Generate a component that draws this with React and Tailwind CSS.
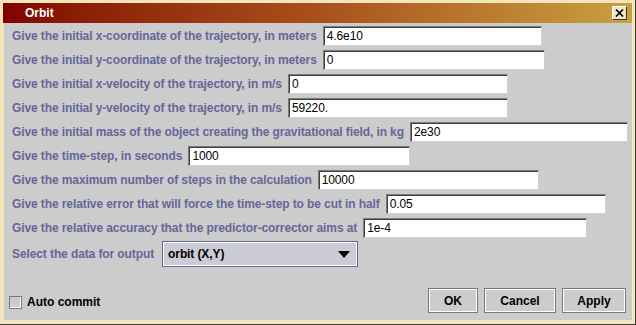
const rows = [
  { label: "Give the initial x-coordinate of the trajectory, in meters", value: "4.6e10", w: "w-[219px]" },
  { label: "Give the initial y-coordinate of the trajectory, in meters", value: "0", w: "w-[222px]" },
  { label: "Give the initial x-velocity of the trajectory, in m/s", value: "0", w: "w-[220px]" },
  { label: "Give the initial y-velocity of the trajectory, in m/s", value: "59220.", w: "w-[220px]" },
  { label: "Give the initial mass of the object creating the gravitational field, in kg", value: "2e30", w: "w-[218px]" },
  { label: "Give the time-step, in seconds", value: "1000", w: "w-[222px]" },
  { label: "Give the maximum number of steps in the calculation", value: "10000", w: "w-[221px]" },
  { label: "Give the relative error that will force the time-step to be cut in half", value: "0.05", w: "w-[220px]" },
  { label: "Give the relative accuracy that the predictor-corrector aims at", value: "1e-4", w: "w-[224px]" },
];

function Field({ value, w }) {
  return (
    <div className={`${w} shrink-0 h-[20px] bg-white border border-[#7a7a7a] border-r-[#cfcfcf] border-b-[#cfcfcf] shadow-[inset_1px_1px_0_#404040] flex items-center pl-[3px] text-[12px] text-black font-normal`}>
      {value}
    </div>
  );
}

function Button({ children, w }) {
  return (
    <div className={`${w} h-[25px] border border-[#7a7a7a] bg-[#cccccc] shadow-[inset_1px_1px_0_#ffffff,inset_-1px_-1px_0_#ffffff] flex items-center justify-center text-[12px] font-bold text-black`}>
      {children}
    </div>
  );
}

export default function App() {
  return (
    <div className="w-[636px] h-[325px] overflow-hidden bg-[#f3e6bd] border-r border-b border-[#3a3a3a] pt-[3px] pl-[3px] pr-[3px] pb-[4px] flex flex-col" style={{ fontFamily: '"Liberation Sans", Arial, sans-serif' }}>
      <div className="h-[20px] bg-gradient-to-r from-[#820000] via-[#a8501c] to-[#c8a040] flex items-center justify-between pl-[22px] pr-[5px]">
        <span className="text-white font-bold text-[12px]">Orbit</span>
        <div className="w-[15px] h-[14px] bg-[#efe5c0] border border-[#3a3a3a] border-t-white border-l-white flex items-center justify-center">
          <svg width="9" height="8" viewBox="0 0 9 8">
            <path d="M1 0.5 L8 7.5 M8 0.5 L1 7.5" stroke="#000" strokeWidth="1.6" />
          </svg>
        </div>
      </div>
      <div className="flex-1 bg-[#cccccc] ml-[1px] pl-[8px] pt-[1px] flex flex-col">
        {rows.map((r) => (
          <div key={r.label} className="h-[24px] flex items-center gap-[6px] text-[12px] font-bold text-[#666699] whitespace-nowrap tracking-[-0.1px]">
            <span>{r.label}</span>
            <Field value={r.value} w={r.w} />
          </div>
        ))}
        <div className="h-[26px] flex items-center gap-[8px] text-[12px] font-bold text-[#666699] mt-[1px] whitespace-nowrap tracking-[-0.1px]">
          <span>Select the data for output</span>
          <div className="w-[196px] h-[26px] border border-[#666699] bg-[#ccccd6] shadow-[inset_1px_1px_0_#ffffff,inset_-1px_-1px_0_#ffffff] flex items-center justify-between pl-[5px] pr-[7px] text-black">
            <span>orbit (X,Y)</span>
            <svg width="12" height="7" viewBox="0 0 12 7">
              <path d="M0 0 L12 0 L6 7 Z" fill="#000" />
            </svg>
          </div>
        </div>
        <div className="flex-1 flex items-end justify-between pb-[7px] pr-[6px]">
          <div className="flex items-center gap-[5px] pb-[2px] -ml-[3px]">
            <div className="w-[13px] h-[13px] bg-[#cccccc] border border-[#7a7a7a] shadow-[inset_-1px_-1px_0_#ffffff]" />
            <span className="text-[12px] font-bold text-black">Auto commit</span>
          </div>
          <div className="flex gap-[6px]">
            <Button w="w-[50px]">OK</Button>
            <Button w="w-[72px]">Cancel</Button>
            <Button w="w-[64px]">Apply</Button>
          </div>
        </div>
      </div>
    </div>
  );
}
